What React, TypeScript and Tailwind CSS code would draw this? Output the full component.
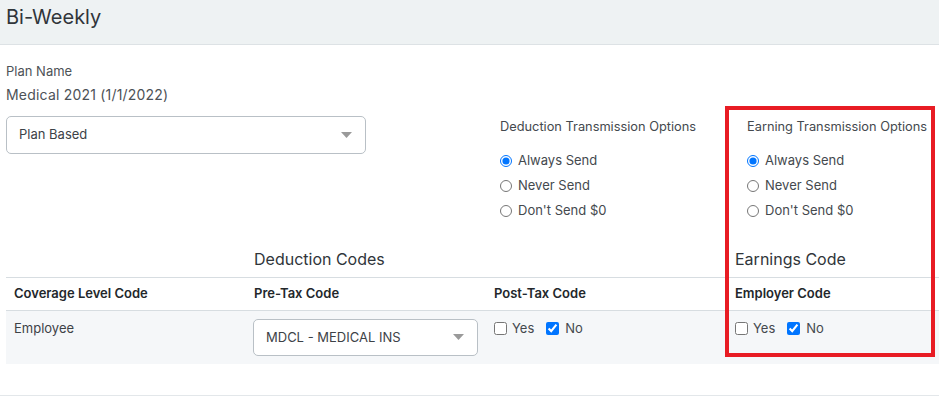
import { ReactNode } from "react";

const font = { fontFamily: "Inter, 'Noto Sans', sans-serif" };

function Caret() {
  return (
    <svg width="11" height="6" viewBox="0 0 11 6" className="shrink-0">
      <path d="M0 0 L11 0 L5.5 6 Z" fill="#9a9a9a" />
    </svg>
  );
}

function FakeSelect({ value, className }: { value: string; className: string }) {
  return (
    <div
      className={`flex items-center justify-between rounded-[5px] border border-[#b9c0c6] bg-white pl-[12px] pr-[13px] text-[13px] text-[#3d4247] ${className}`}
    >
      <span>{value}</span>
      <Caret />
    </div>
  );
}

function Radio({ label, checked }: { label: string; checked?: boolean }) {
  return (
    <label className="flex h-[25.3px] items-center gap-[6px] text-[13px] text-[#44494e]">
      <input type="radio" defaultChecked={checked} className="m-0 h-[12px] w-[12px]" />
      {label}
    </label>
  );
}

function RadioGroup({ title }: { title: string }) {
  return (
    <div>
      <div className="mb-[11px] mt-[1px] h-[20px] text-[12.8px] leading-[20px] text-[#44494e]">{title}</div>
      <div className="flex flex-col">
        <Radio label="Always Send" checked />
        <Radio label="Never Send" />
        <Radio label="Don't Send $0" />
      </div>
    </div>
  );
}

function YesNo() {
  return (
    <div className="flex items-center text-[13px] text-[#44494e]">
      <input type="checkbox" className="m-0 h-[13px] w-[13px]" />
      <span className="ml-[5px] mr-[12px]">Yes</span>
      <input type="checkbox" defaultChecked className="m-0 h-[13px] w-[13px]" />
      <span className="ml-[6px]">No</span>
    </div>
  );
}

function Th({ children }: { children: ReactNode }) {
  return <div className="px-[8px] text-[13px] font-semibold text-[#23272b]">{children}</div>;
}

export default function App() {
  return (
    <div className="relative h-[397px] w-[939px] overflow-hidden bg-white" style={font}>
      <div className="h-[45px] border-b border-[#dde2e5] bg-[#eef2f3] px-[6px] pt-[3px] text-[20px] leading-[28px] text-[#30353a]">
        Bi-Weekly
      </div>

      <div className="px-[6px] pt-[17px]">
        <div className="text-[13px] leading-[18px] text-[#4d5257]">Plan Name</div>
        <div className="mt-[5px] text-[14px] leading-[20px] tracking-[0.2px] text-[#4d5257]">
          Medical 2021 (1/1/2022)
        </div>

        <div className="mt-[11px] grid grid-cols-[494px_247px_1fr]">
          <FakeSelect value="Plan Based" className="h-[38px] w-[360px]" />
          <RadioGroup title="Deduction Transmission Options" />
          <RadioGroup title="Earning Transmission Options" />
        </div>
      </div>

      <div className="ml-[6px] mt-[17px]">
        <div className="grid h-[36px] grid-cols-[240px_240px_241px_1fr] items-center pt-[1px] text-[16px] text-[#30353a]">
          <div />
          <div className="px-[8px]">Deduction Codes</div>
          <div />
          <div className="px-[8px]">Earnings Code</div>
        </div>
        <div className="grid h-[34px] grid-cols-[240px_240px_241px_1fr] items-center border-y border-[#d7dde1]">
          <Th>Coverage Level Code</Th>
          <Th>Pre-Tax Code</Th>
          <Th>Post-Tax Code</Th>
          <Th>Employer Code</Th>
        </div>
        <div className="grid h-[53px] grid-cols-[240px_240px_241px_1fr] bg-[#f5f7f9] pt-[8px]">
          <div className="px-[8px] text-[13px] leading-[18px] text-[#3d4247]">Employee</div>
          <div className="pl-[7px] pr-[8px]">
            <FakeSelect value="MDCL - MEDICAL INS" className="h-[37px] w-full" />
          </div>
          <div className="px-[8px]">
            <YesNo />
          </div>
          <div className="px-[8px]">
            <YesNo />
          </div>
        </div>
      </div>

      <div className="mt-[31px] border-t border-[#e3e7ea]" />

      <div className="absolute left-[725px] top-[106px] h-[251px] w-[210px] border-[4px] border-[#e81c24]" />
    </div>
  );
}
